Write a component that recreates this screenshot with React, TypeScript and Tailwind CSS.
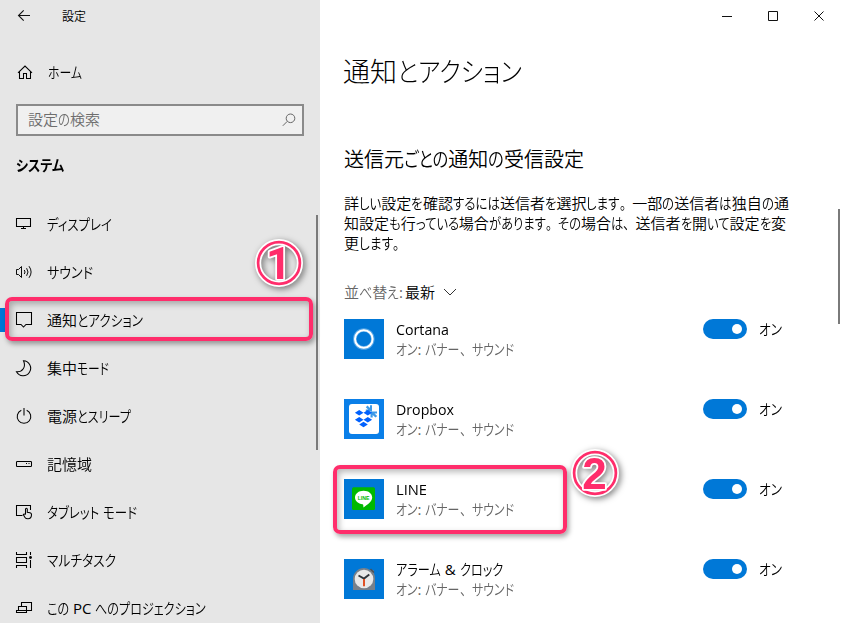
import { useLayoutEffect, useRef, useState, type ReactNode } from "react";

const KANA = /[\u3041-\u30ff]/;
const PUNCTUATION = /[、。]/;
const LATIN = /[A-Za-z:&]/;
const RUNS = /([\u3041-\u30ff]+|[、。])/;

function runClass(run: string) {
  if (PUNCTUATION.test(run)) return "inline-block origin-left [font-feature-settings:normal]";
  if (LATIN.test(run)) return "inline-block origin-left font-normal";
  return "inline-block origin-left";
}

/** Text whose kana are condensed so that the line is `width` pixels long. */
function Fit({ text, width, className = "" }: { text: string; width: number; className?: string }) {
  const ref = useRef<HTMLSpanElement>(null);
  const [sizes, setSizes] = useState<{ scale: number; widths: number[] } | null>(null);
  const runs = text.split(RUNS).filter(Boolean);
  const hasKana = KANA.test(text);
  const isFlexible = (r: string) => !hasKana || KANA.test(r) || PUNCTUATION.test(r);

  useLayoutEffect(() => {
    const spans = Array.from(ref.current!.querySelectorAll<HTMLElement>("[data-run]"));
    const widths = spans.map((s) => s.getBoundingClientRect().width);
    let fixed = 0;
    let flexible = 0;
    runs.forEach((r, i) => {
      if (isFlexible(r)) flexible += widths[i];
      else fixed += widths[i];
    });
    setSizes({ scale: flexible ? (width - fixed) / flexible : 1, widths });
  }, []);

  return (
    <span ref={ref} className={`inline-block whitespace-pre ${className}`}>
      {runs.map((r, i) => {
        const fit = sizes && isFlexible(r);
        return (
          <span key={i} className="inline-block" style={fit ? { width: sizes.widths[i] * sizes.scale } : undefined}>
            <span
              data-run
              className={runClass(r)}
              style={fit ? { transform: `scaleX(${sizes.scale})` } : undefined}
            >
              {r}
            </span>
          </span>
        );
      })}
    </span>
  );
}

function Icon({ children }: { children: ReactNode }) {
  return (
    <svg width="18" height="18" viewBox="0 0 18 18" fill="none" stroke="#000" strokeWidth="1.05" className="block shrink-0">
      {children}
    </svg>
  );
}

const nav = [
  {
    label: "ディスプレイ",
    width: 65,
    icon: <path d="M1.5 3.5H15.5V11.5H1.5ZM8.5 12V13.5M6 13.5H11" />,
  },
  {
    label: "サウンド",
    width: 46,
    icon: (
      <path
        strokeWidth="0.95"
        d="M1.5 6.5H3.5L6.5 3.5V14.5L3.5 11.5H1.5ZM9.3 7Q10.8 9 9.3 11M11.6 5.2Q14.4 9 11.6 12.8M14 3.2Q18.2 9 14 14.8"
      />
    ),
  },
  {
    label: "通知とアクション",
    width: 96,
    active: true,
    icon: <path d="M1.5 1.5H16.5V13.5H11L8.5 16L6 13.5H1.5Z" />,
  },
  {
    label: "集中モード",
    width: 62,
    icon: <path d="M8.5 1.7A7.5 7.5 0 1 1 1.5 12.7C7.5 13.2 11.3 8 8.5 1.7Z" />,
  },
  {
    label: "電源とスリープ",
    width: 84,
    icon: <path d="M6.3 3.3A6.8 6.8 0 1 0 11.7 3.3M9 1V8.5" />,
  },
  {
    label: "記憶域",
    width: 45,
    icon: (
      <>
        <rect x="1.5" y="6.5" width="15" height="5" rx="0.8" />
        <path d="M11 8.5H12M13.5 8.5H14.5" />
      </>
    ),
  },
  {
    label: "タブレット モード",
    width: 90,
    icon: (
      <path d="M7.5 12.5H1.5V2.5H15.5V7M10.5 11.5V6.3Q10.5 5.2 11.4 5.2T12.3 6.3V9.3L15 9.8Q16.6 10.2 16.5 11.8Q16.4 15.8 13 15.8Q10.8 15.8 9.8 14.2L8.3 11.6Q9 10.5 10.5 11.5" />
    ),
  },
  {
    label: "マルチタスク",
    width: 69,
    icon: (
      <>
        <path d="M1.5 1V3.5H11.5V1M1.5 6.5H11.5V11.5H1.5ZM1.5 17V14.5H11.5V17M15.5 1V4M15.5 9V17" />
        <circle cx="15.5" cy="6.5" r="1.4" fill="#000" stroke="none" />
      </>
    ),
  },
  {
    label: "この PC へのプロジェクション",
    width: 159,
    icon: <path d="M6.5 7V3.5H16.5V11.5H12M3.5 11.5V7.5H11.5V11.5M1.5 11.5H11.5V13.5H1.5Z" />,
  },
];

const CortanaLogo = () => (
  <svg width="40" height="40" className="block shrink-0 bg-[#0078d7]">
    <circle cx="19.8" cy="20" r="9" fill="none" stroke="#8ac4f2" strokeWidth="3.6" opacity="0.6" />
    <circle cx="19.8" cy="20" r="8.8" fill="none" stroke="#fff" strokeWidth="2" />
  </svg>
);

const DropboxLogo = () => (
  <svg width="40" height="40" className="block shrink-0 bg-[#0a7fe8]">
    <rect x="5" y="5" width="30" height="30" rx="3" fill="#fff" />
    <path
      fill="#3d9ae8"
      d="M21.8 8.2L23.5 6.5L26 9V6.3H28V12.3H21.8V10.5H24.2ZM26.5 12.5H33V14.5H30.5L33.2 17L31.5 18.6L28.7 16V18.5H26.5Z"
    />
    <path
      fill="#0061fe"
      d="M15.2 11L19.5 13.7L15.2 16.4L10.9 13.7ZM23.8 11L28.1 13.7L23.8 16.4L19.5 13.7ZM15.2 18L19.5 20.7L15.2 23.4L10.9 20.7ZM23.8 18L28.1 20.7L23.8 23.4L19.5 20.7ZM19.5 22.8L23.8 25.5L19.5 28.2L15.2 25.5Z"
    />
  </svg>
);

const LineLogo = () => (
  <svg width="40" height="40" className="block shrink-0 bg-[#0078d7]">
    <rect x="8" y="8.3" width="23" height="22.7" rx="1.5" fill="#00b900" />
    <path
      fill="#fff"
      d="M19.6 11.8C24.6 11.8 28.2 14.7 28.2 18.6C28.2 22.2 24 25.5 19.5 28.4C19.2 27.2 19.6 26 18.6 25.3C14.2 24.8 11 22.2 11 18.6C11 14.7 14.7 11.8 19.6 11.8Z"
    />
    <text x="19.6" y="20.8" textAnchor="middle" fill="#00b900" className="font-['Liberation_Sans'] text-[5.2px] font-bold">
      LINE
    </text>
  </svg>
);

const ClockLogo = () => (
  <svg width="40" height="40" className="block shrink-0 bg-[#0078d7]">
    <path d="M9 31V20A11 11 0 0 1 20 9A11 11 0 0 1 26 11L29.5 11L30 14.5A11 11 0 0 1 31 20V31Z" fill="#77808a" />
    <path d="M26.5 10L30 13.5" stroke="#4a5058" strokeWidth="1.5" />
    <circle cx="20" cy="20" r="9.3" fill="#e8e8e8" />
    <path d="M14.5 16.5L20 19.5L25.3 15.5" fill="none" stroke="#30343a" strokeWidth="1.9" />
    <path d="M20 20V27.3" stroke="#e0491b" strokeWidth="1.9" />
  </svg>
);

const senders = [
  { name: "Cortana", width: 53, logo: <CortanaLogo /> },
  { name: "Dropbox", width: 58, logo: <DropboxLogo /> },
  { name: "LINE", width: 31, logo: <LineLogo /> },
  { name: "アラーム & クロック", width: 107, logo: <ClockLogo /> },
];

function Badge({ digit, className, digitClass }: { digit: string; className: string; digitClass: string }) {
  return (
    <svg
      width="60"
      height="60"
      viewBox="-30 -30 60 60"
      className={`absolute drop-shadow-[2px_2px_3px_rgba(0,0,0,0.5)] ${className}`}
    >
      <circle r="20.9" fill="none" stroke="#fff" strokeWidth="6.2" />
      <circle r="20.9" fill="none" stroke="#ff2d6b" strokeWidth="2.7" />
      <text
        x="-0.5"
        y="15.5"
        textAnchor="middle"
        fill="#ff2d6b"
        stroke="#fff"
        strokeWidth="3.6"
        strokeLinejoin="round"
        className={`font-bold [paint-order:stroke] ${digitClass}`}
      >
        {digit}
      </text>
    </svg>
  );
}

const frame =
  "absolute rounded-[7px] border-4 border-[#ff2d6b] shadow-[2px_3px_5px_rgba(0,0,0,0.35),inset_2px_3px_6px_rgba(0,0,0,0.28)]";

export default function App() {
  return (
    <div className="relative flex h-[623px] w-[842px] overflow-hidden bg-white font-['Open_Sans','Noto_Sans_CJK_JP',sans-serif] text-[15px] leading-5 font-[350] text-black [font-feature-settings:'palt']">
      <aside className="flex w-80 shrink-0 bg-[#e6e6e6]">
        <div className="w-[316px]">
          <header className="flex h-8 items-center pl-[17px]">
            <svg width="14" height="14" viewBox="0 0 14 14" fill="none" stroke="#111" className="block">
              <path d="M13 6.5H1.5M6.7 1.3L1.5 6.5L6.7 11.7" strokeWidth="1.1" />
            </svg>
            <span className="mt-0.5 ml-[31px] text-[12px]">設定</span>
          </header>
          <div className="mt-6 flex h-8 items-center pl-4">
            <Icon>
              <path d="M2 9.8L9 3L16 9.8M3.5 8.5V15.5H7.5V10.5H10.5V15.5H14.5V8.5" />
            </Icon>
            <Fit text="ホーム" width={34} className="ml-[14px]" />
          </div>
          <div className="mt-4 ml-4 flex h-8 w-72 items-center justify-between border-2 border-[#8a8a8a] bg-[#f0f0f0] pr-1.5 pb-0.5 pl-2.5 text-[#6d6d6d]">
            <Fit text="設定の検索" width={72} />
            <svg width="14" height="14" viewBox="0 0 14 14" fill="none" stroke="#666" className="mt-0.5 block">
              <circle cx="8.5" cy="5.3" r="4.3" />
              <path d="M5.3 8.3L0.8 12.8" />
            </svg>
          </div>
          <h2 className="mt-[19px] ml-4 h-[21px] font-bold">
            <Fit text="システム" width={48} />
          </h2>
          <nav className="mt-6">
            {nav.map((n) => (
              <div key={n.label} className="flex h-12 items-center">
                <div className={n.active ? "h-6 w-[5px] bg-[#0078d7]" : "h-6 w-[5px]"} />
                <div className="ml-2.5">
                  <Icon>{n.icon}</Icon>
                </div>
                <Fit text={n.label} width={n.width} className="ml-[14px]" />
              </div>
            ))}
          </nav>
        </div>
        <div className="mt-[215px] h-[235px] w-0.5 bg-[#7a7a7a]" />
      </aside>

      <main className="flex min-w-0 flex-1">
        <div className="w-[518px] pl-6">
          <header className="flex h-8 items-center justify-end pr-3">
            <svg width="104" height="12" viewBox="0 0 104 12" fill="none" stroke="#111" className="block">
              <path d="M0 6.5H10M46.5 1.5H55.5V10.5H46.5ZM92.5 1.5L101.5 10.5M101.5 1.5L92.5 10.5" />
            </svg>
          </header>
          <h1 className="mt-5 -ml-px h-10 text-[27px] leading-10 font-light">
            <Fit text="通知とアクション" width={179} />
          </h1>
          <h2 className="mt-[54px] h-7 text-[20px] leading-7">
            <Fit text="送信元ごとの通知の受信設定" width={240} />
          </h2>
          <p className="mt-[19px] flex flex-col items-start">
            <Fit text="詳しい設定を確認するには送信者を選択します。一部の送信者は独自の通" width={445} />
            <Fit text="知設定も行っている場合があります。その場合は、送信者を開いて設定を変" width={442} />
            <Fit text="更します。" width={62} />
          </p>
          <div className="mt-[29px] flex h-5 items-center">
            <Fit text="並べ替え:" width={59} className="text-[#666]" />
            <span className="ml-[2px]">最新</span>
            <svg width="14" height="8" viewBox="0 0 14 8" fill="none" stroke="#333" className="ml-2 block">
              <path d="M1 1L7 7L13 1" />
            </svg>
          </div>
          <ul className="mt-[17px]">
            {senders.map((s) => (
              <li key={s.name} className="flex h-20 items-start">
                {s.logo}
                <div className="ml-3 flex w-[307px] flex-col items-start">
                  <Fit text={s.name} width={s.width} />
                  <Fit text="オン: バナー、サウンド" width={118} className="text-[#666]" />
                </div>
                <div className="flex h-5 w-11 items-center justify-end rounded-full bg-[#0078d7] pr-[5px]">
                  <div className="size-2.5 rounded-full bg-white" />
                </div>
                <Fit text="オン" width={23} className="ml-3" />
              </li>
            ))}
          </ul>
        </div>
        <div className="mt-[209px] h-[115px] w-0.5 bg-[#7a7a7a]" />
      </main>

      <div className={`${frame} top-[297px] left-[5px] h-[44px] w-[308px]`} />
      <div className={`${frame} top-[465px] left-[333px] h-[69px] w-[234px]`} />
      <Badge digit="1" className="top-[233px] left-[249px]" digitClass="font-['Roboto'] text-[44px]" />
      <Badge digit="2" className="top-[443px] left-[565px]" digitClass="font-['Liberation_Sans'] text-[44px]" />
    </div>
  );
}
